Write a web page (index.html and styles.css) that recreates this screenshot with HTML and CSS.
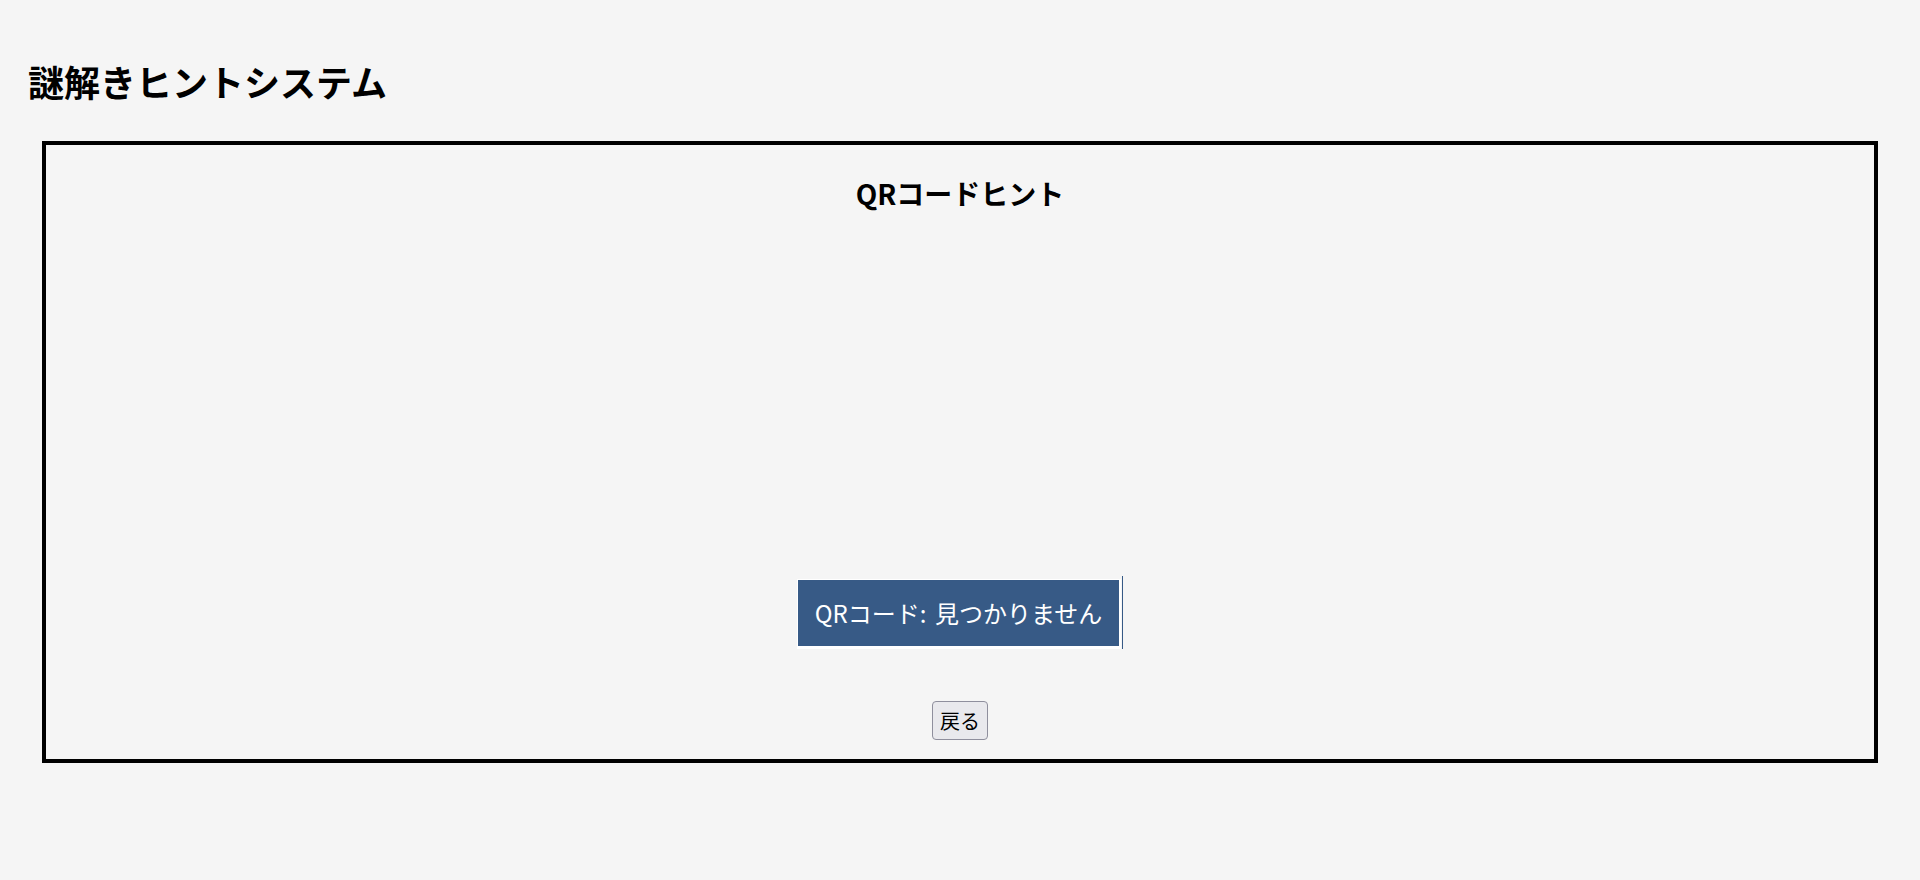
FILE: index.html
```html
<!DOCTYPE html>
<html lang="ja">
<head>
<meta charset="utf-8">
<title>謎解きヒントシステム</title>
<link rel="stylesheet" href="styles.css">
</head>
<body>
<h1 class="title">謎解きヒントシステム</h1>
<main class="panel">
  <h2 class="panel-title">QRコードヒント</h2>
  <div class="scanner"></div>
  <div class="result-row">
    <div class="result-frame">
      <div class="result">QRコード: 見つかりません</div>
    </div>
    <span class="caret"></span>
  </div>
  <div class="actions">
    <button class="back" type="button">戻る</button>
  </div>
</main>
</body>
</html>
```

FILE: styles.css
```css
html, body {
  margin: 0;
  padding: 0;
}
body {
  background: #f5f5f5;
  color: #000;
  font-family: "Noto Sans CJK JP", "Noto Sans", sans-serif;
  padding: 0 28px;
}
.title {
  margin: 55px 0 34px;
  font-size: 36px;
  line-height: 52px;
  font-weight: 700;
}
.panel {
  margin: 0 14px;
  border: 4px solid #000;
  height: 614px;
  display: flex;
  flex-direction: column;
  align-items: center;
}
.panel-title {
  margin: 28px 0 0;
  font-size: 28px;
  line-height: 40px;
  font-weight: 700;
}
.scanner {
  height: 363px;
}
.result-row {
  display: flex;
  align-items: flex-end;
  gap: 1px;
}
.result-frame {
  background: #fff;
  padding: 1px 2px 3px 1px;
}
.result {
  background: #375a86;
  color: #fff;
  font-size: 24px;
  line-height: 36px;
  padding: 15px 17px;
  word-spacing: 3px;
}
.caret {
  width: 1px;
  height: 73px;
  background: #375a86;
}
.actions {
  margin-top: 52px;
}
.back {
  font-family: "Noto Sans CJK JP", sans-serif;
  font-size: 20px;
  line-height: 29px;
  padding: 4px 7px;
  background: #e9e9ed;
  border: 1px solid #8f8f9d;
  border-radius: 4px;
  color: #000;
}
```
